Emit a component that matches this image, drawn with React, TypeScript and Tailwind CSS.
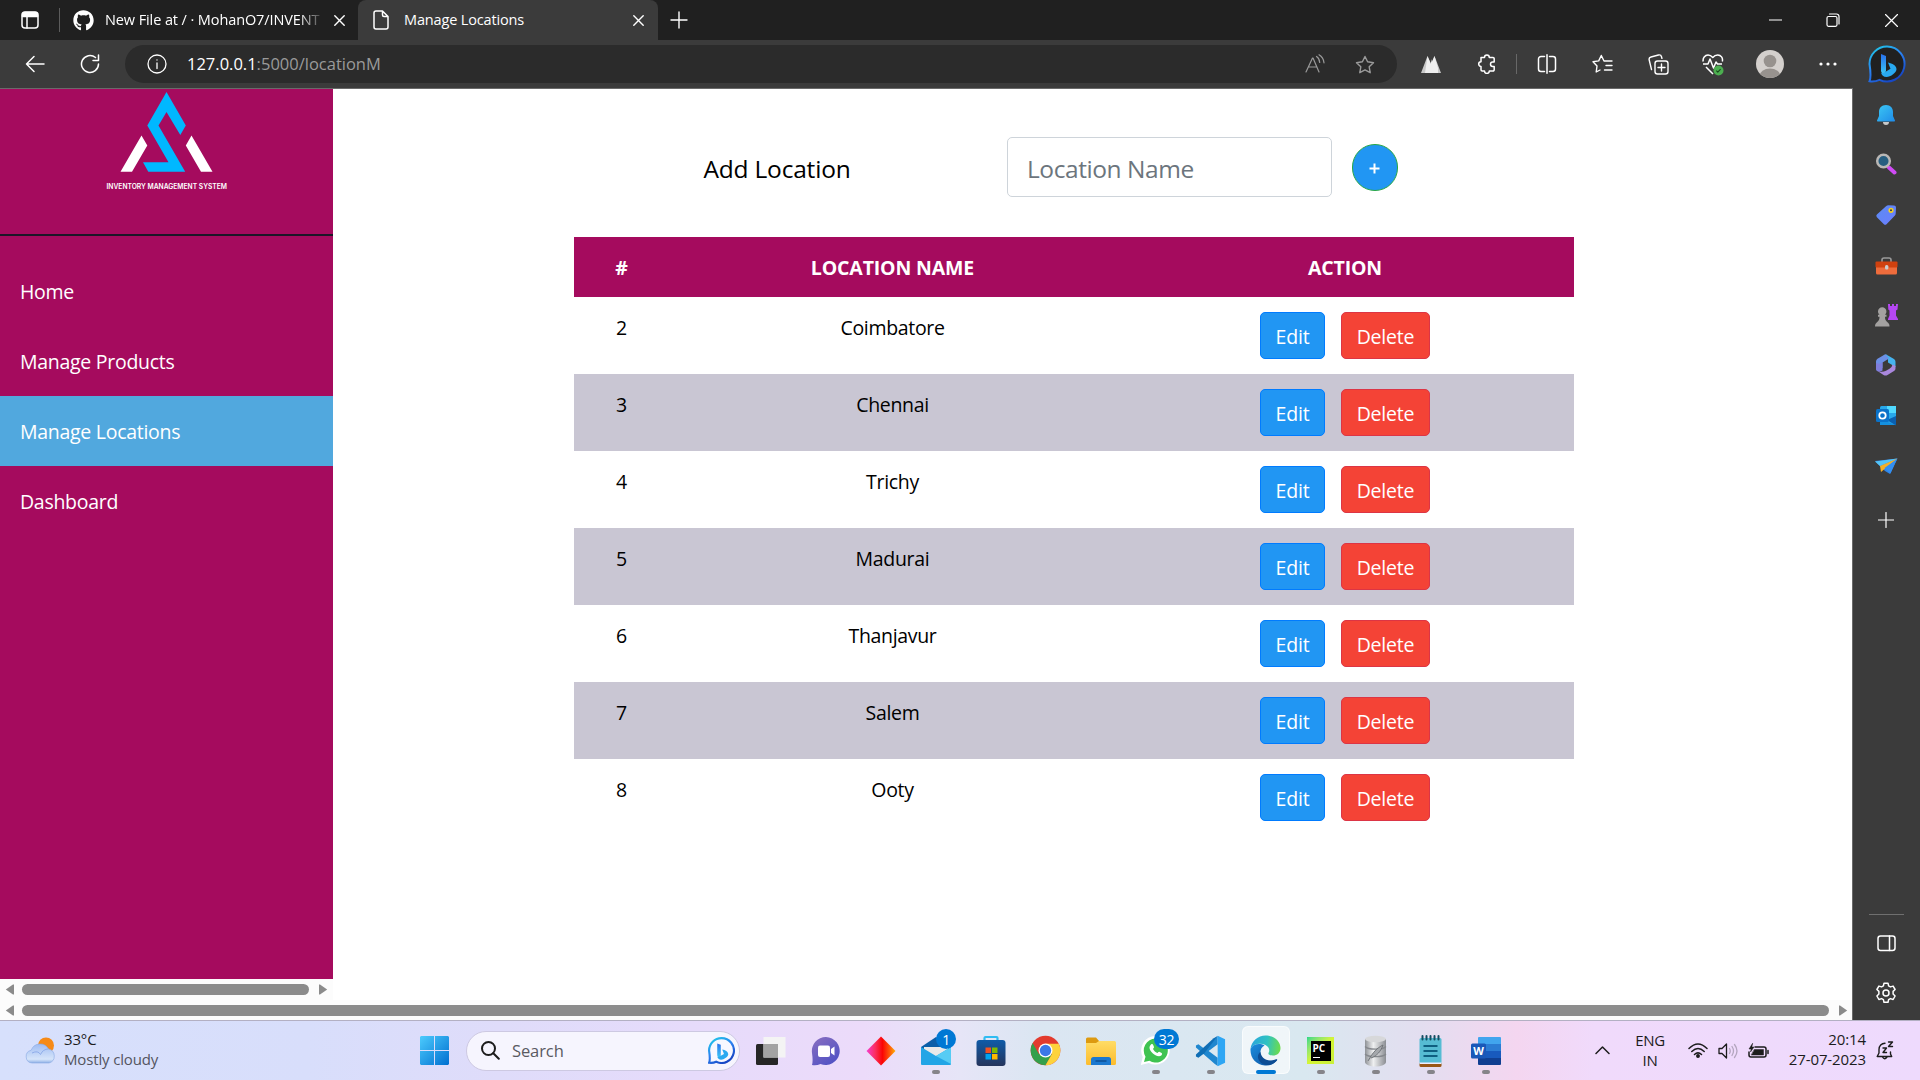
import React from "react";
import { FaGithub } from "react-icons/fa";

type IconProps = { w: number; h?: number; vb?: string; sw?: number; className?: string; children: React.ReactNode };

function Line({ w, h = w, vb, sw = 1.5, className = "", children }: IconProps) {
  return (
    <svg width={w} height={h} viewBox={vb ?? `0 0 ${w} ${h}`} fill="none" stroke="currentColor" strokeWidth={sw} strokeLinecap="round" strokeLinejoin="round" className={`shrink-0 ${className}`}>
      {children}
    </svg>
  );
}

const CloseIcon = ({ s = 11, className = "" }: { s?: number; className?: string }) => (
  <Line w={s} vb="0 0 11 11" sw={1.4} className={className}>
    <path d="M.8.8l9.4 9.4M10.2.8L.8 10.2" />
  </Line>
);

function TabBar() {
  return (
    <div className="flex h-10 bg-[#202020] text-white">
      <div className="flex w-[358px] items-center">
        <Line w={18} className="ml-[21px]">
          <rect x="1" y="1" width="16" height="16" rx="3" />
          <path d="M1.5 4a2.5 2.5 0 0 1 2.5-2.5h10A2.5 2.5 0 0 1 16.500 4v1.500h-15z" fill="currentColor" />
          <path d="M6 6v11" />
        </Line>
        <div className="ml-5 h-6 w-px bg-[#5c5c5c]" />
        <FaGithub className="ml-[13px] size-[21px]" />
        <div className="ml-[11px] w-[220px] whitespace-nowrap text-[14.5px] tracking-[-0.1px] [mask-image:linear-gradient(to_right,black_88%,transparent_100%)]">
          New File at / · MohanO7/INVENT
        </div>
        <CloseIcon className="ml-[9px]" />
      </div>
      <div className="flex w-[300px] items-center rounded-t-lg bg-[#3b3b3b]">
        <Line w={16} h={20} className="ml-[15px]">
          <path d="M9.500 1H3a2 2 0 0 0-2 2v14a2 2 0 0 0 2 2h10a2 2 0 0 0 2-2V6.500zM9.500 1v4a1.500 1.500 0 0 0 1.500 1.500h4" />
        </Line>
        <div className="ml-[15px] w-[229px] text-[14.5px] tracking-[-0.15px]">Manage Locations</div>
        <CloseIcon />
      </div>
      <Line w={18} className="ml-3 self-center" sw={1.4}>
        <path d="M9 1v16M1 9h16" />
      </Line>
      <div className="ml-auto flex items-center pr-[22px]">
        <Line w={13} sw={1.2}><path d="M.5 6h12" /></Line>
        <Line w={14} sw={1.2} className="ml-[44px]">
          <rect x="1" y="3.500" width="10" height="9.800" rx="1.500" />
          <path d="M3.500 1h7A2.500 2.500 0 0 1 13 3.500V11" />
        </Line>
        <Line w={13} sw={1.2} className="ml-[45px]"><path d="M.5.5l12 12M12.500.5l-12 12" /></Line>
      </div>
    </div>
  );
}

const starPath = "M10 1.500l2.600 5.300 5.900.9-4.300 4.100 1 5.900L10 14.900l-5.200 2.800 1-5.900L1.500 7.700l5.900-.9z";

function BingBubble({ size, dark }: { size: number; dark?: boolean }) {
  const id = dark ? "bd" : "bl";
  return (
    <svg width={size} height={size} viewBox="0 0 38 38" className="shrink-0">
      <defs>
        <linearGradient id={id} x1="0" y1="0" x2=".6" y2="1">
          <stop offset="0" stopColor="#1fd0e8" /><stop offset=".55" stopColor="#2a7ff0" /><stop offset="1" stopColor="#1747c4" />
        </linearGradient>
        <linearGradient id={id + "2"} x1="0" y1="0" x2="0" y2="1">
          <stop offset="0" stopColor="#2870ec" /><stop offset="1" stopColor="#3cc7f5" />
        </linearGradient>
      </defs>
      <path d="M19 1.500A17.500 17.500 0 1 1 11.500 34.800Q7 37 1.500 36.300Q3.500 32 1.500 19A17.500 17.500 0 0 1 19 1.500z" fill={dark ? "#202020" : "#f7f8ff"} stroke={`url(#${id})`} strokeWidth={dark ? 2 : 3} />
      <path d="M13 9l5 2v15l-1.500 3c-2 0-3.500-1.500-3.500-3.500z" fill={`url(#${id}2)`} />
      <path d="M18 26.500l4.500-2.700-2.500-6.300c4.500 1 8 2.500 8.500 6.500.3 3.500-6 8-10 8-3 0-5-2-5.500-4.500 1 1 3 .5 5-1z" fill="#29a9f0" />
    </svg>
  );
}

function Toolbar() {
  return (
    <div className="flex h-12 items-center bg-[#3b3b3b] text-white">
      <Line w={20} h={18} className="ml-[25px]">
        <path d="M9 1.500L1.500 9 9 16.500M1.500 9H19" />
      </Line>
      <Line w={20} className="ml-[35px]">
        <path d="M18.500 10A8.500 8.500 0 1 1 15.500 3.500M18.500 1v5.500H13" />
      </Line>
      <div className="ml-[25px] flex h-[38px] w-[1272px] items-center rounded-full bg-[#2b2b2b]">
        <Line w={20} sw={1.3} className="ml-[22px]">
          <circle cx="10" cy="10" r="9" /><path d="M10 9v5.500M10 5.800v.3" />
        </Line>
        <div className="ml-5 text-[16.5px] text-[#9a9a9a]"><span className="text-white">127.0.0.1</span>:5000/locationM</div>
        <Line w={20} className="ml-auto text-[#9a9a9a]" sw={1.2}>
          <path d="M1 18L7.500 4h.5l6 14M3.500 13h8.500M11.500 2.500c2 1.200 3 3 3.200 6M14 .8c3 1.800 4.700 4.500 5 8" />
        </Line>
        <Line w={20} h={19} className="mr-[22px] ml-[30px] text-[#9a9a9a]" sw={1.4}><path d={starPath} /></Line>
      </div>
      <svg width="20" height="17" viewBox="0 0 20 17" className="ml-6">
        <path d="M0 17L6.500 0 10 8l3.500-8L20 17z" fill="#c9c9c9" /><path d="M6.500 0L10 8l3.500-8L17 12v5H4z" fill="#fff" opacity=".7" /><path d="M10 3l-.1 5L6 17h8z" fill="#eee" />
      </svg>
      <Line w={19} h={20} className="ml-9">
        <path d="M4 3.500h3.500a2.400 2.400 0 0 1 4.800 0H16a1.200 1.200 0 0 1 1.200 1.200V8h-1.500a2.200 2.200 0 0 0 0 4.400h1.500v3.400a1.200 1.200 0 0 1-1.200 1.200h-3.700a2.400 2.400 0 0 1-4.800 0H5.200A1.200 1.200 0 0 1 4 15.800v-3.400a2.300 2.300 0 0 1 0-4.600z" />
      </Line>
      <div className="ml-[20px] h-5 w-px bg-[#686868]" />
      <Line w={20} h={20} className="ml-5">
        <path d="M7.500 2.500H4a2.500 2.500 0 0 0-2.500 2.500v10A2.500 2.500 0 0 0 4 17.500h3.500M12.500 2.500H16a2.500 2.500 0 0 1 2.500 2.500v10a2.500 2.500 0 0 1-2.500 2.500h-3.500M10 .8v18.400" />
      </Line>
      <Line w={21} h={20} className="ml-[35px]" sw={1.4}>
        <path d="M8 16l-3.800 2 .8-6L1 7.800l5.700-.9L9.300 1.500 12 7h8M14 11.500h6M12.500 16H20" />
      </Line>
      <Line w={21} h={21} className="ml-[35px]" sw={1.4}>
        <rect x="7" y="7" width="13" height="13" rx="2.500" /><path d="M13.500 10v7M10 13.500h7M3.500 15.500L1.200 6A2.500 2.500 0 0 1 3 3l7.500-2a2.500 2.500 0 0 1 3 1.800l.4 1.500" />
      </Line>
      <svg width="22" height="23" viewBox="0 0 22 23" fill="none" stroke="currentColor" strokeWidth="1.500" strokeLinejoin="round" className="ml-[33px]">
        <path d="M1.200 8.500C.5 5 3 2 6 2c2.300 0 3.500 1 4.800 2.500C12 3 13.500 2 15.700 2c3.300 0 5.500 3 4.600 6.500M1 11h5l2-5 3.500 9 2.500-6 1.500 2H20M4 14l7 7" />
        <circle cx="16.500" cy="17.500" r="5" fill="#4caf50" stroke="none" /><path d="M14.300 17.700l1.500 1.500 2.800-3" stroke="#1c4a1e" strokeWidth="1.100" />
      </svg>
      <svg width="28" height="28" viewBox="0 0 28 28" className="ml-8">
        <clipPath id="av"><circle cx="14" cy="14" r="14" /></clipPath>
        <g clipPath="url(#av)"><rect width="28" height="28" fill="#d4d0cd" /><circle cx="14" cy="11" r="6.300" fill="#97928e" /><ellipse cx="14" cy="26" rx="10.500" ry="7.500" fill="#97928e" /></g>
      </svg>
      <svg width="18" height="4" viewBox="0 0 18 4" fill="white" className="ml-[35px]"><circle cx="2" cy="2" r="1.600" /><circle cx="9" cy="2" r="1.600" /><circle cx="16" cy="2" r="1.600" /></svg>
      <div className="ml-auto pr-[14px]"><BingBubble size={38} dark /></div>
    </div>
  );
}

const menu = ["Home", "Manage Products", "Manage Locations", "Dashboard"];

function ScrollBar({ thumb, h }: { thumb: string; h: string }) {
  return (
    <div className={`flex ${h} items-center bg-[#fcfcfc] pl-[5px]`}>
      <svg width="9" height="11" viewBox="0 0 9 11" fill="#8b8b8b"><path d="M.8 5.500L8 .5h1v10H8z" /></svg>
      <div className={`ml-2 h-[11px] rounded-full bg-[#8b8b8b] ${thumb}`} />
      <svg width="9" height="11" viewBox="0 0 9 11" fill="#8b8b8b" className="ml-[10px]"><path d="M8.200 5.500L1 .5H0v10h1z" /></svg>
    </div>
  );
}

function SideMenu() {
  return (
    <div className="flex w-[333px] flex-col">
      <div className="h-[890px] bg-[#a50b5e]">
        <div className="h-[147px] border-b-2 border-[#1c1627]">
          <svg width="333" height="120" viewBox="0 0 333 120">
            <path d="M166.500 3l19.300 33.500-5.500 9.500L166.500 23l-8 13.500 26.700 46.200H148.300l-5.300-9.500h25.500L147.300 36.500z" fill="#00b8ff" />
            <path d="M141.500 46.500l5.800 10-15.300 26.200h-11.500zM191.500 46.500l-5.700 10 15.200 26.200h11.500z" fill="#fff" />
            <text x="106.500" y="100.300" textLength="120.500" lengthAdjust="spacingAndGlyphs" fill="#fff" fontSize="7" fontWeight="600" fontFamily="Inter, sans-serif" letterSpacing="0">INVENTORY MANAGEMENT SYSTEM</text>
          </svg>
        </div>
        <div className="pt-5 text-[19.500px] tracking-[-0.28px] text-white">
          {menu.map((m) => (
            <div key={m} className={`flex h-[70px] items-center pt-0.5 pl-5 ${m === "Manage Locations" ? "bg-[#51a8de]" : ""}`}>{m}</div>
          ))}
        </div>
      </div>
      <ScrollBar thumb="w-[287px]" h="h-[21px]" />
    </div>
  );
}

const rows: [number, string][] = [[2, "Coimbatore"], [3, "Chennai"], [4, "Trichy"], [5, "Madurai"], [6, "Thanjavur"], [7, "Salem"], [8, "Ooty"]];

function Main() {
  return (
    <div className="w-[1519px] bg-white pt-12 pl-[241px] text-black">
      <div className="flex h-[60px] items-center">
        <div className="w-[433px] pt-1 pl-[129.5px] text-[24.500px] tracking-[-0.2px]">Add Location</div>
        <div className="flex h-[60px] w-[325px] items-center rounded-[5px] border border-[#ced4da] pt-1 pl-[19px] text-[24.500px] tracking-[-0.43px] text-[#6c757d]">Location Name</div>
        <div className="ml-5 flex h-[47px] w-[46px] items-center justify-center rounded-full border border-[#28a745] bg-[#2196f3] text-white">
          <svg width="11" height="11" viewBox="0 0 11 11" stroke="currentColor" strokeWidth="2" className="mt-[3px] mr-px"><path d="M5.500.5v10M.5 5.500h10" /></svg>
        </div>
      </div>
      <div className="mt-10 w-[1000px] text-center text-[19.500px] tracking-[-0.32px]">
        <div className="grid h-[60px] grid-cols-[95px_447px_458px] items-center bg-[#a50b5e] pt-0.5 text-[19.500px] font-bold tracking-[-0.15px] text-white">
          <div>#</div><div>LOCATION NAME</div><div>ACTION</div>
        </div>
        {rows.map(([n, name], i) => (
          <div key={n} className={`grid h-[77px] grid-cols-[95px_447px_458px] pt-[15px] leading-[32px] ${i % 2 ? "bg-[#c9c6d3]" : ""}`}>
            <div>{n}</div>
            <div>{name}</div>
            <div className="flex justify-center gap-4 leading-[47px] tracking-[-0.2px] text-white">
              <div className="h-[47px] w-[65px] rounded-[5px] border border-[#007bff] bg-[#2196f3]">Edit</div>
              <div className="h-[47px] w-[89px] rounded-[5px] border border-[#dc3545] bg-[#f44336]">Delete</div>
            </div>
          </div>
        ))}
      </div>
    </div>
  );
}

function EdgeRail() {
  return (
    <div className="flex w-[68px] flex-col items-center border-l border-[#6a6a6a] bg-[#3b3b3b] pt-4 pr-px text-white">
      <svg width="22" height="22" viewBox="0 0 22 22">
        <defs><linearGradient id="bell" x1="0" y1="0" x2="1" y2="1"><stop offset="0" stopColor="#3cc8f4" /><stop offset="1" stopColor="#1f8be8" /></linearGradient></defs>
        <path d="M8 18h6a3 3 0 0 1-6 0z" fill="#c8c8c8" /><path d="M11 1c4.500 0 7 3 7 7v4l2 4.500c0 .6-.3 1-1 1H3c-.7 0-1-.4-1-1L4 12V8c0-4 2.500-7 7-7z" fill="url(#bell)" />
      </svg>
      <svg width="22" height="22" viewBox="0 0 22 22" className="mt-[27px]">
        <path d="M14 14.500l5.500 5" stroke="#d04bf5" strokeWidth="4" strokeLinecap="round" /><circle cx="8.500" cy="8" r="6.300" fill="#275e80" stroke="#b9b7b5" strokeWidth="2.500" />
      </svg>
      <svg width="22" height="22" viewBox="0 0 22 22" className="mt-[29px]">
        <defs><linearGradient id="tag" x1="0" y1="0" x2="1" y2="1"><stop offset="0" stopColor="#5b8cf2" /><stop offset="1" stopColor="#6c7dff" /></linearGradient></defs>
        <path d="M11 2.200Q12 1.200 13.500 1.200L19 1.500q2 0 2 2l-.3 6q0 1.200-1 2.200l-8.200 8.500q-1.300 1.300-2.600 0l-7-7q-1.300-1.300 0-2.700z" fill="url(#tag)" /><circle cx="16" cy="6.300" r="1.800" fill="#28345c" stroke="#f3cf20" strokeWidth="1.600" />
      </svg>
      <svg width="23" height="18" viewBox="0 0 23 18" className="mt-[31px]">
        <path d="M7 5V3a2 2 0 0 1 2-2h5a2 2 0 0 1 2 2v2" fill="none" stroke="#9a9a9a" strokeWidth="1.600" /><rect x="1" y="8" width="21" height="9.500" rx="1.500" fill="#ee6c3c" /><rect x=".5" y="4.500" width="22" height="6" rx="1" fill="#d0410f" /><rect x="10" y="8" width="3.400" height="4.500" rx="1.500" fill="#ccc" />
      </svg>
      <svg width="23" height="23" viewBox="0 0 23 23" className="mt-[29px]">
        <path d="M13 0h2v2h2V0h2v2h2V0h2l-.5 5.500-1.500 1v5l2 3.500v1H13v-1l1.500-3.500v-5l-1.200-1z" fill="#b547f3" /><path d="M3 7.500a4.200 4.200 0 0 1 8.400 0c0 1.500-.6 2.300-1.400 3.200h1.500v2H10c0 2.500.5 4 3 6 1 1 1.500 2 1.500 3.800H0c0-1.800.5-2.800 1.500-3.800 2.500-2 3-3.500 3-6H3v-2h1.500C3.600 9.800 3 9 3 7.500z" fill="#a3a1a0" />
      </svg>
      <svg width="22" height="22" viewBox="0 0 22 22" className="mt-[27px]">
        <path d="M8.500 1.200Q10.500 0 12.500 1.200L19 5q1.500 1 1.500 2.800V13L13 8.500V5z" fill="#45b3ee" />
        <path d="M12.500.9Q10.500 0 8.500 1.200L2.500 4.800Q1 5.800 1 7.500v7q0 1.500 1.500 2.500L7.500 14V8.500L14 4.500 11 1z" fill="#6c8fe6" />
        <path d="M1 9v6q0 1.500 1.500 2.300 2.500 1 5-.8V8q-2 3-6.500 1z" fill="#7f7ddb" />
        <path d="M2.500 17l6 4q2 1 4 0l6.500-4q1.500-1 1.500-2.500V12l-3-1.500q-.5 3-3 4.300l-3.500 2q-4 2-8.500.2z" fill="#a987dc" />
      </svg>
      <svg width="22" height="22" viewBox="0 0 22 22" className="mt-[29px]">
        <rect x="5" y="1" width="16" height="19" rx="1.500" fill="#28a8ea" /><path d="M12 1h9v7h-9z" fill="#50d9ff" /><path d="M5 14l16 6H5z" fill="#1490df" /><path d="M21 11v9.500L12 15z" fill="#0a5fb0" /><rect x="1" y="4" width="13" height="13" rx="1.500" fill="#0a72c9" /><circle cx="7.500" cy="10.500" r="3.200" fill="none" stroke="#fff" strokeWidth="1.800" />
      </svg>
      <svg width="23" height="18" viewBox="0 0 23 18" className="mt-[30px]">
        <path d="M0 4L22.500 1.500 15 17l-5-3z" fill="#2f86ea" /><path d="M0 4.500L22.500 1.500 5 9z" fill="#54c4f7" /><path d="M5 9l17.500-7.500L9.500 12 6 15z" fill="#f6b026" /><path d="M9.500 11L22 2 15.500 16.500z" fill="#348ff0" />
      </svg>
      <Line w={16} sw={1.2} className="mt-[37px]"><path d="M8 .5v15M.5 8h15" /></Line>
      <div className="mt-auto h-px w-[35px] bg-[#6f6f6f]" />
      <Line w={19} h={17} className="mt-[20px]"><rect x="1" y="1" width="17" height="14.500" rx="2.500" /><path d="M12.500 1v14.500" /></Line>
      <Line w={22} h={22} className="mt-[30px] mb-4">
        <circle cx="11" cy="11" r="3" />
        <path d="M9 1.200h4l.6 2.700 1.800 1 2.700-.8 2 3.400-2 1.900v2.600l2 2-2 3.500-2.700-.9-1.800 1-.6 2.700H9l-.6-2.700-1.800-1-2.700.9-2-3.500 2-2V9.400l-2-1.900 2-3.400 2.700.8 1.800-1z" />
      </Line>
    </div>
  );
}

function Cell({ children, running, badge, active }: { children: React.ReactNode; running?: boolean; badge?: string; active?: boolean }) {
  return (
    <div className="relative flex h-full w-[55px] shrink-0 items-center justify-center">
      {active && <div className="absolute top-[5px] h-12 w-12 rounded-md border border-white/60 bg-white/60" />}
      <div className="relative">{children}</div>
      {badge && <div className={`absolute top-2 z-10 flex h-5 items-center justify-center rounded-full bg-[#0078d4] text-[14px] tracking-[-0.3px] text-white ${badge.length > 1 ? "left-[26px] w-[25px]" : "left-[28px] w-5"}`}>{badge}</div>}
      {running && <div className={`absolute top-[49px] h-1 rounded-full ${active ? "w-5 bg-[#0078d4]" : "w-2 bg-[#858489]"}`} />}
    </div>
  );
}

function TaskIcons() {
  return (
    <>
      <Cell>
        <svg width="30" height="30" viewBox="0 0 30 30" className="block"><rect y="8" width="22" height="21" rx="1.500" fill="#262626" /><path d="M7.500 1h22v20.500h-22z" fill="#f4f4f4" /><path d="M7.500 8H22v13.500H7.500z" fill="#a3a3a3" /></svg>
      </Cell>
      <Cell>
        <svg width="30" height="30" viewBox="0 0 30 30" className="block">
          <defs><linearGradient id="chat" x1="0" y1="0" x2=".7" y2="1"><stop offset="0" stopColor="#8a6fc0" /><stop offset="1" stopColor="#5152c4" /></linearGradient></defs>
          <path d="M15 1a14 14 0 1 1-5.500 27Q5 30 1 29q1.200-4 0-12A14 14 0 0 1 15 1z" fill="url(#chat)" /><rect x="7" y="9.500" width="12" height="11.500" rx="2" fill="#fff" /><path d="M20 13l3.500-2.500v9L20 17z" fill="#fff" />
        </svg>
      </Cell>
      <Cell>
        <svg width="30" height="30" viewBox="0 0 30 30" className="block">
          <defs><linearGradient id="dia"><stop offset="0" stopColor="#f53ed0" /><stop offset=".3" stopColor="#fa2f60" /><stop offset=".55" stopColor="#fb0505" /><stop offset=".8" stopColor="#fd5a0a" /><stop offset="1" stopColor="#ffb300" /></linearGradient></defs>
          <path d="M15 .5L29.500 15 15 29.500.5 15z" fill="url(#dia)" />
        </svg>
      </Cell>
      <Cell running badge="1">
        <svg width="30" height="30" viewBox="0 0 30 30" className="block"><path d="M0 11L15 1l15 10v10H0z" fill="#0b5ea8" /><path d="M3 11h24v9H3z" fill="#e9e9e9" /><path d="M0 11l15 9 15-9v17a1 1 0 0 1-1 1H1a1 1 0 0 1-1-1z" fill="#22a5e6" /><path d="M30 11v17L15 20z" fill="#56ccf4" /></svg>
      </Cell>
      <Cell>
        <svg width="30" height="32" viewBox="0 0 30 32" className="block">
          <defs><linearGradient id="store" x1="0" y1="0" x2="0" y2="1"><stop offset="0" stopColor="#0f5ba8" /><stop offset="1" stopColor="#25345c" /></linearGradient></defs>
          <path d="M8.500 7V3a1 1 0 0 1 1-1h11a1 1 0 0 1 1 1v4" fill="none" stroke="#2fbcf2" strokeWidth="2.200" /><rect x=".5" y="5" width="29" height="26" rx="3" fill="url(#store)" /><path d="M9.500 12.500H15V18H9.500z" fill="#f25022" /><path d="M16 12.500h5.500V18H16z" fill="#7fba00" /><path d="M9.500 19H15v5.500H9.500z" fill="#00a4ef" /><path d="M16 19h5.500v5.500H16z" fill="#ffb900" />
        </svg>
      </Cell>
      <Cell>
        <svg width="31" height="31" viewBox="0 0 48 48" className="block"><circle cx="24" cy="24" r="23" fill="#e33b2e" /><path d="M4.100 12.500A23 23 0 0 0 24 47l10-17.200-20 0z" fill="#34a04b" /><path d="M24 13.500h20.500A23 23 0 0 1 24 47l10-17.500z" fill="#fdd33c" /><circle cx="24" cy="24" r="10.800" fill="#fff" /><circle cx="24" cy="24" r="8.800" fill="#3b78e7" /></svg>
      </Cell>
      <Cell>
        <svg width="30" height="30" viewBox="0 0 30 30" className="block">
          <defs><linearGradient id="fold" x1="0" y1="0" x2="0" y2="1"><stop offset="0" stopColor="#ffdc66" /><stop offset="1" stopColor="#fcbc2c" /></linearGradient></defs>
          <path d="M0 3a1.500 1.500 0 0 1 1.500-1.500h8.500L13 5v4H0z" fill="#dd9a10" /><path d="M0 7h10l3-2h15.500A1.500 1.500 0 0 1 30 6.500v21a1.500 1.500 0 0 1-1.500 1.500h-27A1.500 1.500 0 0 1 0 27.500z" fill="url(#fold)" /><path d="M5 29v-5.500A2.500 2.500 0 0 1 7.500 21h15a2.500 2.500 0 0 1 2.500 2.500V29z" fill="#1b78cf" /><path d="M9.500 25h11" stroke="#0c4f94" strokeWidth="1.500" />
        </svg>
      </Cell>
      <Cell running badge="32">
        <svg width="31" height="31" viewBox="0 0 31 31" className="block"><path d="M15.500 1a14.300 14.300 0 1 1-6.700 27L.8 30l2-8A14.300 14.300 0 0 1 15.500 1z" fill="#fff" /><path d="M15.500 3.500a12 12 0 1 1-6 22.200L4 27l1.500-5.300A12 12 0 0 1 15.500 3.500z" fill="#3fc351" /><path d="M11 9.500c1-.8 1.800-.5 2.200.5l.8 2c.2.700-.8 1.500-1 2 1 2 2.500 3.200 4.300 4 .7-.5 1.300-1.600 2-1.300l2.300 1.200c.8.500.4 2-.4 2.700-1.500 1.200-3.700.8-6.200-.5-3-1.600-5.200-4.600-5.500-7 0-1.500.6-2.900 1.500-3.600z" fill="#fff" /></svg>
      </Cell>
      <Cell running>
        <svg width="31" height="32" viewBox="0 0 100 100" className="block"><path d="M73 2L30 43 11 28 3 32v7l60 52 10 7z" fill="#1f87cf" /><path d="M73 2L30 57 11 72l-8-4v-7L60 9z" fill="#0f6eb5" /><path d="M73 1l24 11v76L73 99V1z" fill="#2ea6f4" /><path d="M73 28v44L44 50z" fill="#dbe9f1" /></svg>
      </Cell>
      <Cell running active>
        <svg width="31" height="31" viewBox="0 0 31 31" className="block">
          <defs>
            <linearGradient id="e1" x1="0" y1=".3" x2="1" y2=".4"><stop offset="0" stopColor="#2aa5dd" /><stop offset=".55" stopColor="#2fc2c2" /><stop offset="1" stopColor="#6bdc4e" /></linearGradient>
            <linearGradient id="e2" x1="0" y1="0" x2="1" y2="1"><stop offset="0" stopColor="#1b8ede" /><stop offset="1" stopColor="#0d4f9e" /></linearGradient>
          </defs>
          <path d="M.5 14C1.500 6 8 .5 15.500.5 24 .5 30.500 6.500 30.500 13c0 5-3.500 7.500-7.500 7.500-3.500 0-5-1.300-4.500-2.500 1.500-2 1-6-3-8C10 7.500 3 9 .5 14z" fill="url(#e1)" />
          <path d="M.5 14C3 8.500 10 8 14.500 10.500c-3 1.500-4.500 4.500-4 8.500.8 6 8 9.500 17 5C24.500 29 20 31 15 30.500 6 30 0 23 .5 14z" fill="url(#e2)" />
          <path d="M10.500 17c.5 6 6.500 10.500 15 7.500 1-.4 2 .2 1.500 1-5 6-14 6-18 0-2-3.500-1-7 1.500-8.500z" fill="#0d4d94" />
        </svg>
      </Cell>
      <Cell running>
        <div className="flex size-[27px] items-center justify-center bg-linear-to-br from-[#21d789] via-[#d4f533] to-[#c9ef3b]">
          <div className="flex size-[20px] flex-col justify-between bg-black p-[2px] text-[10px] leading-[10px] font-bold text-white"><span>PC</span><span className="mb-px h-px w-[7px] bg-white" /></div>
        </div>
      </Cell>
      <Cell running>
        <svg width="23" height="32" viewBox="0 0 23 32" className="block">
          <defs><linearGradient id="db"><stop offset="0" stopColor="#8e9196" /><stop offset=".4" stopColor="#eff0f1" /><stop offset="1" stopColor="#8b8e93" /></linearGradient></defs>
          <path d="M1 4v23c0 2.500 5 4.500 10.500 4.500S22 29.500 22 27V4z" fill="url(#db)" /><ellipse cx="11.500" cy="4" rx="10.500" ry="3.300" fill="#d7d8da" /><path d="M1 11.500c3 3.500 18 3.500 21 0M1 19c3 3.500 18 3.500 21 0" fill="none" stroke="#85888d" strokeWidth="1.200" /><path d="M4 26C9 17 13 13 19 10c-2 6-6 11-12 13" fill="#a5a8ac" stroke="#6c6f74" strokeWidth=".9" />
        </svg>
      </Cell>
      <Cell running>
        <svg width="23" height="32" viewBox="0 0 23 32" className="block"><rect x=".5" y="3" width="22" height="27" rx="1.500" fill="#56bcd3" /><path d="M.5 28h22v2.500a1.500 1.500 0 0 1-1.500 1.500H2A1.500 1.500 0 0 1 .5 30.500z" fill="#9a5716" /><path d="M.5 27.500h22v1.500H.5z" fill="#eef" /><path d="M4.500 11h14M4.500 16h14M4.500 21h14" stroke="#0f5f80" strokeWidth="1.800" /><path d="M3.500 1v3.500M7.500 1v3.500M11.500 1v3.500M15.500 1v3.500M19.500 1v3.500" stroke="#134e62" strokeWidth="2" strokeLinecap="round" /></svg>
      </Cell>
      <Cell running>
        <svg width="30" height="30" viewBox="0 0 30 30" className="block"><path d="M7 2a1 1 0 0 1 1-1h21a1 1 0 0 1 1 1v6.500H7z" fill="#41a5ee" /><path d="M7 8h23v7H7z" fill="#2b7cd3" /><path d="M7 15h23v7H7z" fill="#185abd" /><path d="M7 22h23v6a1 1 0 0 1-1 1H8a1 1 0 0 1-1-1z" fill="#103f91" /><rect y="7.500" width="15" height="15" rx="1.500" fill="#1a58b8" /><text x="7.500" y="19" textAnchor="middle" fill="#fff" fontSize="11" fontWeight="700">W</text></svg>
      </Cell>
    </>
  );
}

function Taskbar() {
  return (
    <div className="flex h-[60px] items-center border-t border-[#b3b0c3] bg-[linear-gradient(90deg,#d7e0fc_0%,#d8defb_16%,#dfdcfa_26%,#e6dbfb_36%,#ecdbfa_45%,#e6e5f7_50%,#dbe6f2_54%,#d9e8f0_68%,#e3def0_74%,#f4d6f0_79%,#f0dafb_83%,#eedafd_100%)] text-[#1c1c1c]">
      <svg width="31" height="27" viewBox="0 0 31 27" className="ml-[25px]">
        <defs><linearGradient id="cl" x1="0" y1="0" x2="0" y2="1"><stop offset="0" stopColor="#9fbcf2" /><stop offset=".8" stopColor="#d6e5fa" /><stop offset="1" stopColor="#8fb0e6" /></linearGradient></defs>
        <circle cx="21" cy="8.500" r="8" fill="#f68a16" /><path d="M7 26a6.500 6.500 0 0 1-.8-12.800A9.500 9.500 0 0 1 23.500 12 7.200 7.200 0 0 1 24 26z" fill="url(#cl)" stroke="#86a7e3" strokeWidth=".6" /><path d="M7 16q6-3 8.500 1.500Q18 12 23.500 12" fill="none" stroke="#8fadea" />
      </svg>
      <div className="ml-2 w-[356px] pb-[3px] text-[15px] leading-5 tracking-[-0.15px]"><div>33°C</div><div className="text-[#54555f]">Mostly cloudy</div></div>
      <svg width="29" height="29" viewBox="0 0 29 29">
        <defs><linearGradient id="win" gradientUnits="userSpaceOnUse" x1="0" y1="0" x2="29" y2="29"><stop offset="0" stopColor="#4ccbfd" /><stop offset="1" stopColor="#006fd0" /></linearGradient></defs>
        <path d="M1 0h13v14H0V1zM15 0h13l1 1v13H15zM0 15h14v14H1l-1-1zM15 15h14v13l-1 1H15z" fill="url(#win)" />
      </svg>
      <div className="ml-[17px] flex h-10 w-[274px] items-center rounded-full border border-[#cdc9e2] bg-[#f6f5fe]">
        <Line w={19} className="ml-[14px]" sw={2}><circle cx="7.500" cy="7.500" r="6.500" /><path d="M12.300 12.300l5.500 5.500" /></Line>
        <span className="ml-[12px] pt-px text-[16.500px] tracking-[-0.1px] text-[#5a5a62]">Search</span>
        <div className="mr-1 ml-auto"><BingBubble size={27} /></div>
      </div>
      <div className="ml-[3px] flex h-full"><TaskIcons /></div>
      <Line w={15} h={9} className="ml-[82px]"><path d="M1 7.500L7.500 1 14 7.500" /></Line>
      <div className="ml-[18px] w-[44px] pb-[2px] text-center text-[15px] leading-5 tracking-[-0.3px]"><div>ENG</div><div>IN</div></div>
      <Line w={20} h={15} className="ml-4" sw={1.5}><path d="M1 5.500Q10-3.500 19 5.500M3.800 8.500q6.200-6 12.400 0M6.500 11.500q3.500-3.200 7 0" /><circle cx="10" cy="13" r="1.200" fill="currentColor" /></Line>
      <Line w={20} h={18} className="ml-[10px]" sw={1.3}><path d="M1 6.500h3L8.500 2v14L4 11.500H1z" /><path d="M11.500 6.500q1.500 2.500 0 5M14 4.500q3 4.500 0 9M16.500 2.500q5 6.500 0 13" stroke="#b3a5be" /></Line>
      <Line w={21} h={16} className="ml-[10px]"><path d="M7 4h9a2 2 0 0 1 2 2v6a2 2 0 0 1-2 2H3a2 2 0 0 1-2-2V9M20 7.500v3" /><path d="M6.500 6.500h9v5.500H3.500z" fill="currentColor" strokeWidth=".5" /><path d="M4.500.5L1 6h2.200L2.500 9 6 4H4z" fill="currentColor" strokeWidth=".5" /></Line>
      <div className="ml-auto pb-[3px] text-right text-[15px] leading-5 tracking-[-0.1px]"><div>20:14</div><div>27-07-2023</div></div>
      <Line w={18} h={20} className="mr-[26px] ml-[10px]" sw={1.4}>
        <path d="M9 2.200C5.500 2.200 3 5 3 8.500V12l-1.800 3.500h14.500L14.500 13v-2M6.500 16q2 3.500 4.500 0M12.500 1h4l-4 4.500h4M7 7h3.500L7 11.500h3.500" />
      </Line>
    </div>
  );
}

export default function App() {
  return (
    <div className="h-[1080px] w-[1920px] overflow-hidden bg-white font-['Open_Sans','Noto_Sans',sans-serif]">
      <TabBar />
      <Toolbar />
      <div className="flex h-[932px]">
        <div className="flex w-[1852px] flex-col border-t border-[#6a6a6a]">
          <div className="flex h-[911px]"><SideMenu /><Main /></div>
          <ScrollBar thumb="w-[1807px]" h="h-5" />
        </div>
        <EdgeRail />
      </div>
      <Taskbar />
    </div>
  );
}
